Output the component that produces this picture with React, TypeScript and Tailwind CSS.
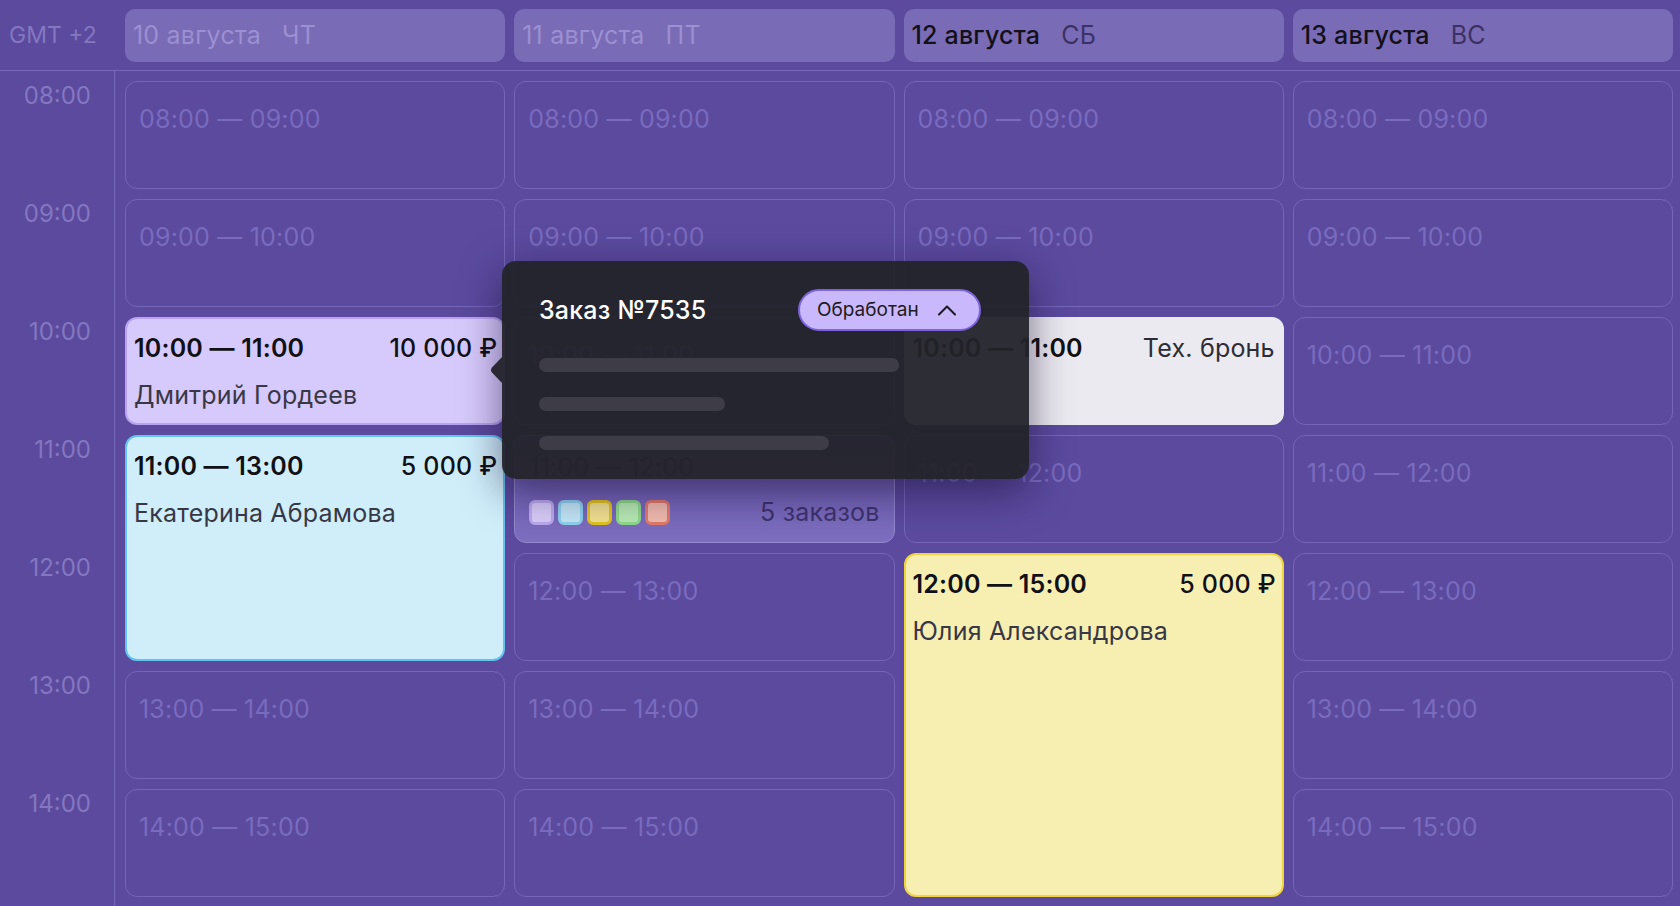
import React from 'react'

type Day = { date: string; dow: string; past?: boolean }

type CalEvent = {
  col: number
  row: number
  span: number
  kind: 'lavender' | 'cyan' | 'yellow' | 'tech' | 'multi'
  time: string
  price?: string
  name?: string
}

const HOURS = ['08:00', '09:00', '10:00', '11:00', '12:00', '13:00', '14:00', '15:00']

const DAYS: Day[] = [
  { date: '10 августа', dow: 'ЧТ', past: true },
  { date: '11 августа', dow: 'ПТ', past: true },
  { date: '12 августа', dow: 'СБ' },
  { date: '13 августа', dow: 'ВС' },
]

const EVENTS: CalEvent[] = [
  { col: 0, row: 2, span: 1, kind: 'lavender', time: '10:00 — 11:00', price: '10 000 ₽', name: 'Дмитрий Гордеев' },
  { col: 0, row: 3, span: 2, kind: 'cyan', time: '11:00 — 13:00', price: '5 000 ₽', name: 'Екатерина Абрамова' },
  { col: 1, row: 3, span: 1, kind: 'multi', time: '11:00 — 12:00' },
  { col: 2, row: 2, span: 1, kind: 'tech', time: '10:00 — 11:00' },
  { col: 2, row: 4, span: 3, kind: 'yellow', time: '12:00 — 15:00', price: '5 000 ₽', name: 'Юлия Александрова' },
]

const colStart = ['col-start-1', 'col-start-2', 'col-start-3', 'col-start-4']
const rowStart = ['row-start-1', 'row-start-2', 'row-start-3', 'row-start-4', 'row-start-5', 'row-start-6', 'row-start-7']
const rowSpan: Record<number, string> = { 1: 'row-span-1', 2: 'row-span-2', 3: 'row-span-3' }

const eventColors: Record<string, string> = {
  lavender: 'bg-[#d6c9fb] border-[#b9a2f2]',
  cyan: 'bg-[#cfeefa] border-[#62c3ee]',
  yellow: 'bg-[#f7eeb1] border-[#efd33f]',
  tech: 'bg-[#ebeaf0] border-[#ebeaf0]',
}

const SWATCHES = [
  'bg-[#d8ccf8] border-[#bba8f0]',
  'bg-[#c2e6f5] border-[#8dd0ee]',
  'bg-[#f1e08e] border-[#e2c21f]',
  'bg-[#b6eab2] border-[#8ed88b]',
  'bg-[#f1baad] border-[#e27a69]',
]

function EmptySlot({ col, row }: { col: number; row: number }) {
  return (
    <div
      className={`${colStart[col]} ${rowStart[row]} rounded-[12px] border-[1.5px] border-[#7666b9] pl-[13px] pt-[23px] text-[25px] leading-[29px] tracking-[0.2px] text-[#7a6bbf]`}
    >
      {HOURS[row]} — {HOURS[row + 1]}
    </div>
  )
}

function EventCard({ ev }: { ev: CalEvent }) {
  const place = `${colStart[ev.col]} ${rowStart[ev.row]} ${rowSpan[ev.span]}`

  if (ev.kind === 'multi') {
    return (
      <div
        className={`${place} flex flex-col rounded-[12px] border-[1.5px] border-[#9487cc] bg-gradient-to-b from-[#6a5aae] to-[#7d6ebf] pl-[14px] pr-[14px] pt-[17px]`}
      >
        <div className="text-[25px] leading-[29px] tracking-[0.2px] text-[#3b3270]">{ev.time}</div>
        <div className="mt-[16px] flex items-center justify-between">
          <div className="flex gap-[4px]">
            {SWATCHES.map((s, i) => (
              <span key={i} className={`h-[25px] w-[25px] rounded-[6px] border-[3px] ${s}`} />
            ))}
          </div>
          <span className="text-[25px] leading-[29px] tracking-[0.2px] text-[#3d336d]">5 заказов</span>
        </div>
      </div>
    )
  }

  if (ev.kind === 'tech') {
    return (
      <div className={`${place} rounded-[12px] border-2 ${eventColors.tech} pl-[7px] pr-[7px] pt-[15px]`}>
        <div className="flex items-center justify-between text-[25px] leading-[29px] tracking-[0.2px]">
          <span className="font-semibold text-[#111]">{ev.time}</span>
          <span className="text-[#2d2c36]">Тех. бронь</span>
        </div>
      </div>
    )
  }

  return (
    <div className={`${place} rounded-[12px] border-2 ${eventColors[ev.kind]} pl-[7px] pr-[6px] pt-[15px]`}>
      <div className="flex items-center justify-between text-[25px] leading-[29px] tracking-[0.2px] text-[#101015]">
        <span className="font-semibold">{ev.time}</span>
        <span className="font-medium">{ev.price}</span>
      </div>
      <div className="mt-[18px] text-[25px] leading-[29px] tracking-[0.2px] text-[#383745]">{ev.name}</div>
    </div>
  )
}

function OrderPopover() {
  return (
    <div className="absolute left-[502px] top-[190px] z-10 h-[218px] w-[527px] rounded-[14px] bg-[#23232a]/95 pl-[37px] pr-[48px] pt-[28px] shadow-[0_12px_40px_rgba(20,10,50,0.55)]">
      <svg className="absolute -left-[12px] top-[96px]" width="12" height="26" viewBox="0 0 12 26">
        <path d="M12 0 L2 10.5 Q0 13 2 15.5 L12 26 Z" fill="#23232a" fillOpacity="0.95" />
      </svg>
      <div className="flex items-center justify-between">
        <span className="text-[25px] font-medium leading-[29px] tracking-[0.2px] text-white">Заказ №7535</span>
        <button className="flex h-[42px] w-[183px] items-center rounded-full border-2 border-[#7d64dc] bg-[#c9b8fb] pl-[17px] pr-[22px] text-[19px] text-[#1b1a22]">
          <span>Обработан</span>
          <svg className="ml-auto" width="20" height="12" viewBox="0 0 20 12" fill="none">
            <path d="M2 10.5 L10 2.5 L18 10.5" stroke="#1b1a22" strokeWidth="2" strokeLinecap="round" strokeLinejoin="round" />
          </svg>
        </button>
      </div>
      <div className="mt-[27px] flex flex-col gap-[25px]">
        <div className="h-[14px] w-[360px] rounded-full bg-[#3d3c47]" />
        <div className="h-[14px] w-[186px] rounded-full bg-[#3d3c47]" />
        <div className="h-[14px] w-[290px] rounded-full bg-[#3d3c47]" />
      </div>
    </div>
  )
}

export default function App() {
  const occupied = new Set<string>()
  EVENTS.forEach((ev) => {
    for (let r = ev.row; r < ev.row + ev.span; r++) occupied.add(`${ev.col}-${r}`)
  })

  return (
    <div className="h-[906px] w-full overflow-hidden bg-[#5b4a9e] [font-family:Inter,'Noto_Sans',sans-serif]">
      {/* header */}
      <div className="flex h-[71px] border-b border-[#7868bb] pt-[9px]">
        <div className="flex h-[53px] w-[115px] items-center pl-[9px] text-[23px] text-[#8477c0]">GMT +2</div>
        <div className="grid flex-1 grid-cols-4 gap-[9px] pl-[10px] pr-[7px]">
          {DAYS.map((d) => (
            <div
              key={d.date}
              className="flex h-[53px] items-center gap-[21px] rounded-[10px] bg-[#7a6bb6] pl-[8px] text-[25px] leading-[29px] tracking-[0.2px]"
            >
              <span className={d.past ? 'text-[#9b90d1]' : 'font-medium text-[#121018]'}>{d.date}</span>
              <span className={d.past ? 'text-[#9b90d1]' : 'text-[#3a3266]'}>{d.dow}</span>
            </div>
          ))}
        </div>
      </div>

      {/* body */}
      <div className="relative flex">
        <div className="w-[115px] shrink-0 border-r border-[#7868bb] pt-[10px] pr-[23px] text-right">
          {HOURS.slice(0, 7).map((h) => (
            <div key={h} className="h-[118px] text-[24px] leading-[29px] text-[#8477c0]">
              {h}
            </div>
          ))}
        </div>
        <div className="grid flex-1 grid-cols-4 grid-rows-[repeat(7,108px)] gap-x-[9px] gap-y-[10px] pl-[10px] pr-[7px] pt-[10px]">
          {DAYS.map((_, c) =>
            HOURS.slice(0, 7).map((_, r) =>
              occupied.has(`${c}-${r}`) ? null : <EmptySlot key={`${c}-${r}`} col={c} row={r} />
            )
          )}
          {EVENTS.map((ev) => (
            <EventCard key={`${ev.col}-${ev.row}`} ev={ev} />
          ))}
        </div>
        <OrderPopover />
      </div>
    </div>
  )
}
